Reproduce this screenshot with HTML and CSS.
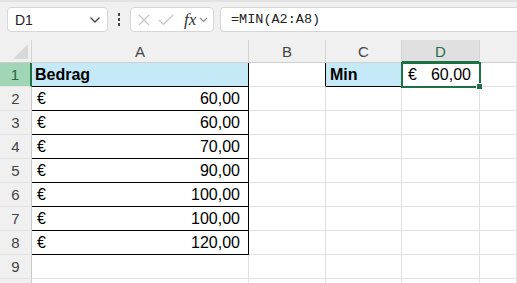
FILE: index.html
```html
<!DOCTYPE html>
<html lang="nl">
<head>
    <meta charset="UTF-8">
    <title>Bedrag - MIN</title>
    <link rel="stylesheet" href="styles.css">
</head>
<body>
    <div class="toolbar">
        <div class="name-box">
            <span>D1</span>
            <svg class="chev" width="12" height="8" viewBox="0 0 12 8"><path d="M1.5 1.5 L6 6 L10.5 1.5" fill="none" stroke="#444" stroke-width="1.3"/></svg>
        </div>
        <div class="dots"><i></i><i></i><i></i></div>
        <div class="fx-box">
            <svg width="12" height="12" viewBox="0 0 12 12"><path d="M1 1 L11 11 M11 1 L1 11" stroke="#c4c4c4" stroke-width="1.2"/></svg>
            <svg width="16" height="12" viewBox="0 0 16 12"><path d="M1 6 L5.5 10.5 L15 1" fill="none" stroke="#c4c4c4" stroke-width="1.2"/></svg>
            <span class="fx">fx</span>
            <svg width="9" height="6" viewBox="0 0 9 6"><path d="M1 1 L4.5 4.5 L8 1" fill="none" stroke="#888" stroke-width="1.1"/></svg>
        </div>
        <div class="formula">=MIN(A2:A8)</div>
    </div>

    <div class="sheet">
        <div class="corner"><span class="tri"></span></div>
        <div class="col-head">A</div>
        <div class="col-head">B</div>
        <div class="col-head">C</div>
        <div class="col-head active">D</div>
        <div class="col-head last"></div>

        <div class="row-head active">1</div>
        <div class="cell a head">Bedrag</div>
        <div class="cell b-edge"></div>
        <div class="cell label">Min</div>
        <div class="cell selected"><span>€</span><span>60,00</span></div>
        <div class="cell"></div>

        <div class="row-head">2</div>
        <div class="cell a money"><span>€</span><span>60,00</span></div>
        <div class="cell"></div><div class="cell"></div><div class="cell"></div><div class="cell"></div>

        <div class="row-head">3</div>
        <div class="cell a money"><span>€</span><span>60,00</span></div>
        <div class="cell"></div><div class="cell"></div><div class="cell"></div><div class="cell"></div>

        <div class="row-head">4</div>
        <div class="cell a money"><span>€</span><span>70,00</span></div>
        <div class="cell"></div><div class="cell"></div><div class="cell"></div><div class="cell"></div>

        <div class="row-head">5</div>
        <div class="cell a money"><span>€</span><span>90,00</span></div>
        <div class="cell"></div><div class="cell"></div><div class="cell"></div><div class="cell"></div>

        <div class="row-head">6</div>
        <div class="cell a money"><span>€</span><span>100,00</span></div>
        <div class="cell"></div><div class="cell"></div><div class="cell"></div><div class="cell"></div>

        <div class="row-head">7</div>
        <div class="cell a money"><span>€</span><span>100,00</span></div>
        <div class="cell"></div><div class="cell"></div><div class="cell"></div><div class="cell"></div>

        <div class="row-head">8</div>
        <div class="cell a money"><span>€</span><span>120,00</span></div>
        <div class="cell"></div><div class="cell"></div><div class="cell"></div><div class="cell"></div>

        <div class="row-head">9</div>
        <div class="cell"></div>
        <div class="cell"></div><div class="cell"></div><div class="cell"></div><div class="cell"></div>

        <div class="row-head"></div>
        <div class="cell"></div>
        <div class="cell"></div><div class="cell"></div><div class="cell"></div><div class="cell"></div>
    </div>
</body>
</html>
```

FILE: styles.css
```css
body {
    margin: 0;
    background: #fff;
    font-family: "Liberation Sans", Arial, sans-serif;
    overflow: hidden;
}
.toolbar {
    height: 40px;
    box-sizing: border-box;
    background: #f0f0f0;
    border-top: 2px solid #e2e2e2;
    display: flex;
    align-items: flex-start;
    padding: 5px 0 0 7px;
}
.name-box {
    width: 101px;
    height: 25px;
    box-sizing: border-box;
    background: #fff;
    border: 1px solid #d6d6d6;
    border-radius: 4px;
    display: flex;
    align-items: center;
    justify-content: space-between;
    padding: 0 6px 0 7px;
    font-size: 14px;
    color: #222;
}
.dots {
    width: 22px;
    height: 25px;
    display: flex;
    flex-direction: column;
    align-items: center;
    justify-content: center;
    gap: 2px;
}
.dots i {
    width: 2px;
    height: 3px;
    background: #444;
}
.fx-box {
    width: 84px;
    height: 25px;
    box-sizing: border-box;
    background: #fff;
    border: 1px solid #d6d6d6;
    border-radius: 4px;
    display: flex;
    align-items: center;
    padding: 0 0 0 7px;
    gap: 8px;
}
.fx-box .fx {
    font-family: "Liberation Serif", serif;
    font-style: italic;
    font-size: 17px;
    color: #333;
    margin-left: 2px;
    margin-right: -5px;
}
.formula {
    flex: 1;
    height: 25px;
    margin-left: 6px;
    box-sizing: border-box;
    background: #fff;
    border: 1px solid #d6d6d6;
    border-right: none;
    border-radius: 4px 0 0 4px;
    padding: 0 0 0 10px;
    line-height: 23px;
    font-family: "Liberation Mono", monospace;
    font-size: 13.5px;
    color: #222;
}

.sheet {
    display: grid;
    grid-template-columns: 32px 217px 77px 76px 78px 1fr;
    grid-template-rows: 23px repeat(10, 24px);
    background: #fff;
}
.sheet > div {
    box-sizing: border-box;
}
.corner {
    background: #f0f0f0;
    border-right: 1px solid #d4d4d4;
    border-bottom: 1px solid #cfcfcf;
    position: relative;
}
.corner .tri {
    position: absolute;
    right: 3px;
    bottom: 3px;
    width: 0;
    height: 0;
    border-left: 15px solid transparent;
    border-bottom: 15px solid #d8d8d8;
}
.col-head {
    background: #f0f0f0;
    border-right: 1px solid #d4d4d4;
    border-bottom: 1px solid #cfcfcf;
    text-align: center;
    font-size: 15px;
    line-height: 23px;
    color: #444;
}
.col-head.active {
    background: #e0e0e0;
    color: #1e7145;
    border-bottom: 2px solid #1e7145;
}
.col-head.last {
    border-right: none;
}
.row-head {
    background: #f0f0f0;
    border-right: 1px solid #c8c8c8;
    border-bottom: 1px solid #e4e4e4;
    text-align: center;
    font-size: 15px;
    line-height: 23px;
    color: #444;
}
.row-head.active {
    background: #a0d6b6;
    color: #1e6b41;
    border-right: 2px solid #1e7145;
}
.cell {
    border-right: 1px solid #e1e1e1;
    border-bottom: 1px solid #e1e1e1;
    font-size: 16px;
    line-height: 23px;
    color: #000;
}
.cell.a {
    border-right: 1px solid #000;
    border-bottom: 1px solid #000;
    padding: 0 8px 0 5px;
}
.cell.head {
    background: #c6e9f8;
    font-weight: bold;
    padding-left: 3px;
}
.money {
    display: flex;
    justify-content: space-between;
}
.cell.b-edge {
    border-right: 1px solid #000;
}
.cell.label {
    background: #c6e9f8;
    border-bottom: 1px solid #000;
    font-weight: bold;
    padding-left: 4px;
}
.cell.selected {
    position: relative;
    display: flex;
    justify-content: space-between;
    padding: 0 8px 0 6px;
    outline: 2px solid #1e7145;
    outline-offset: -1px;
}
.cell.selected::after {
    content: "";
    position: absolute;
    right: -4px;
    bottom: -4px;
    width: 5px;
    height: 5px;
    background: #1e7145;
    border: 1px solid #fff;
}
```
